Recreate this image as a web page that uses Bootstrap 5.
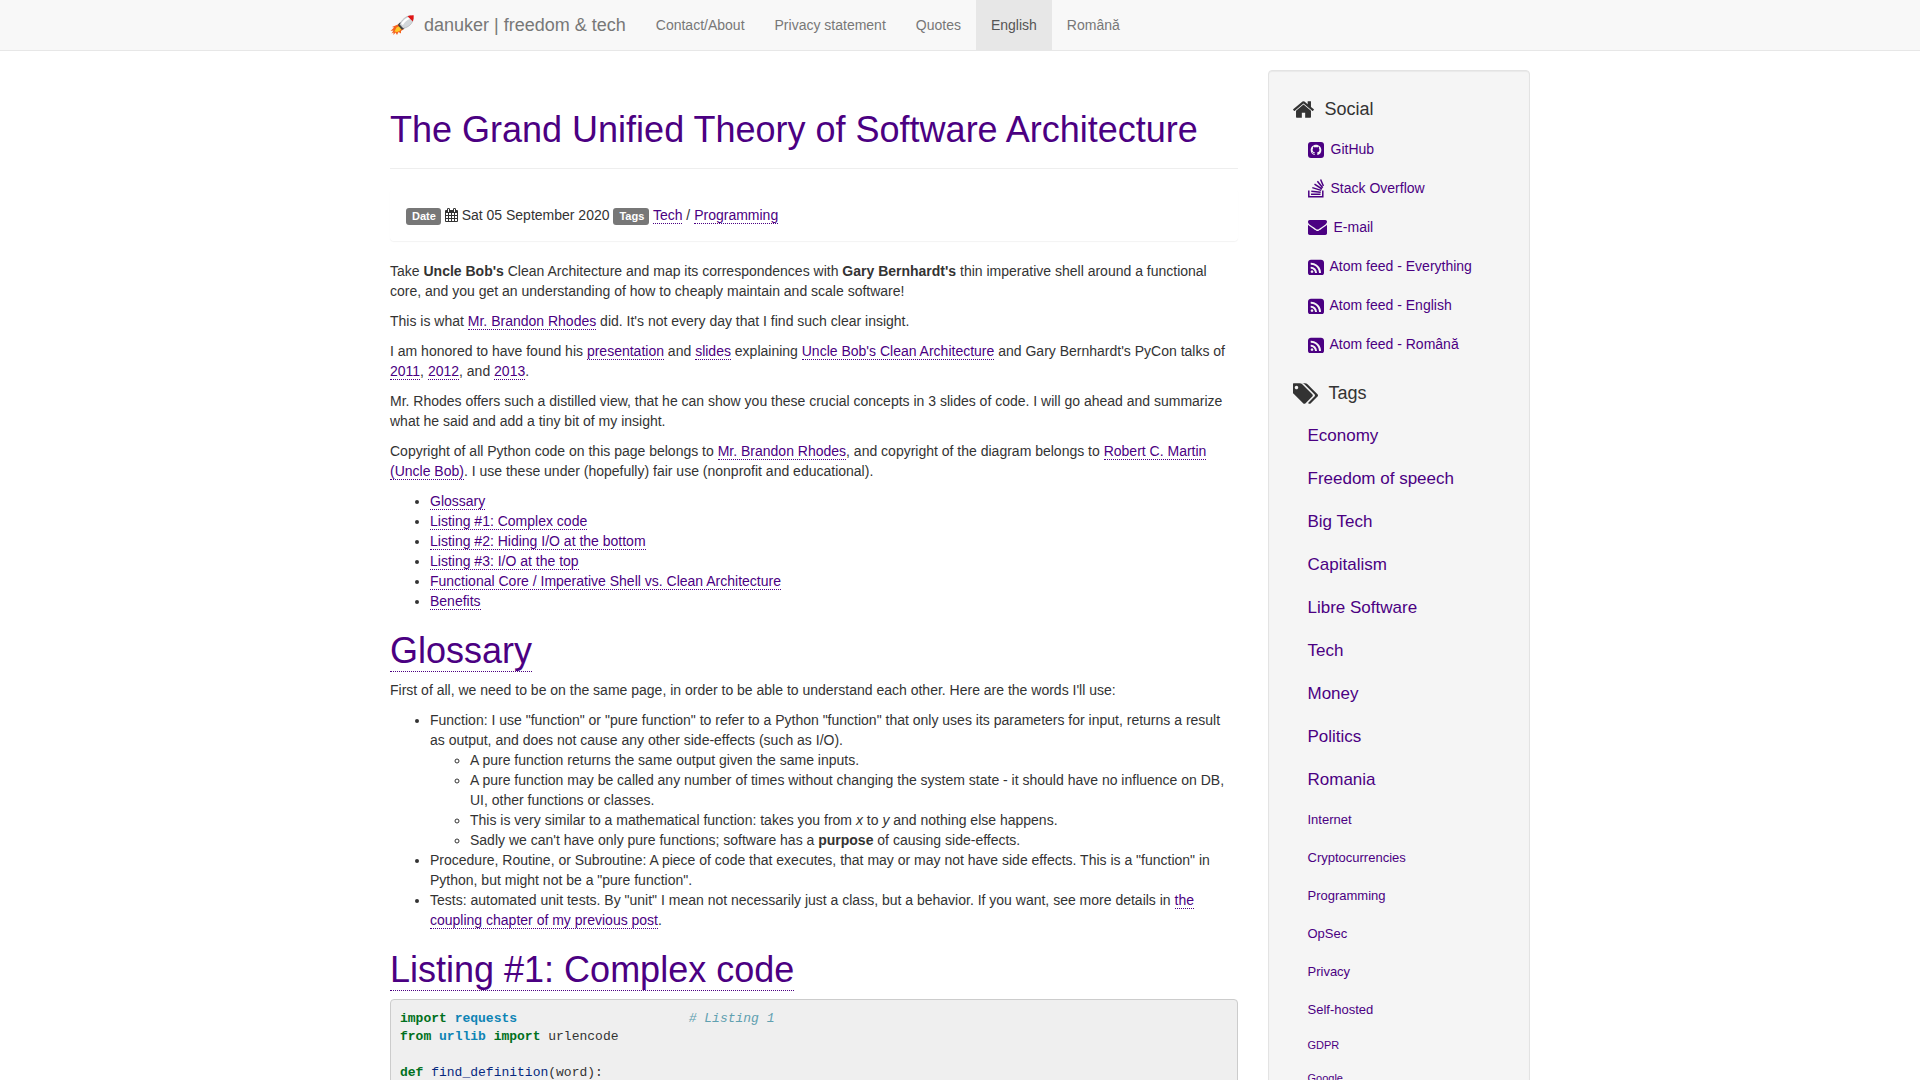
<!DOCTYPE html>
<html lang="en">
<head>
<meta charset="utf-8">
<meta name="viewport" content="width=device-width, initial-scale=1">
<title>The Grand Unified Theory of Software Architecture</title>
<link href="https://cdn.jsdelivr.net/npm/bootstrap@5.3.0/dist/css/bootstrap.min.css" rel="stylesheet">
<style>
:root { --indigo: #4b0082; }
body { font-family: "Liberation Sans", Arial, sans-serif; font-size: 14px; line-height: 20px; color: #333; background: #fff; padding-top: 70px; }
a { color: var(--indigo); text-decoration: none; }
a:hover { color: #2a004a; }
.site-width { --bs-gutter-x: 30px; max-width: 1170px; }
.site-row { --bs-gutter-x: 30px; }

.site-nav { background: #f8f8f8; border-bottom: 1px solid #e7e7e7; padding: 0; }
.site-nav .navbar-brand { color: #777; font-size: 18px; line-height: 20px; padding: 15px 15px 15px 0; margin: 0; gap: 10px; }
.site-nav .nav-link { color: #777; padding: 15px !important; line-height: 20px; }
.site-nav .nav-link.active { color: #555; background: #e7e7e7; }

article h1 { font-size: 36px; line-height: 39px; font-weight: 400; color: var(--indigo); margin: 20px 0 10px; }
article p { margin-bottom: 10px; }
article ul { padding-left: 40px; margin-bottom: 10px; }
article ul ul { margin-bottom: 0; }
article p a, article li a, article h1 a, .post-info a { border-bottom: 1px dotted var(--indigo); }
article .title-bar a { border-bottom: 0; }
.title-bar { border-bottom: 1px solid #eee; padding: 40px 0 9px; margin-bottom: 20px; }
.title-bar h1 { margin-top: 0; }
.post-info { border: 1px solid transparent; border-radius: 4px; box-shadow: 0 1px 1px rgba(0,0,0,.05); padding: 15px; margin-bottom: 20px; }
.post-info .badge { display: inline; background: #777; font-size: 11px; line-height: 11px; padding: 2px 5px 3px 6px; border-radius: 3px; vertical-align: baseline; }
.post-info svg { vertical-align: -2px; }
.listing { font-family: "Liberation Mono", monospace; font-size: 13px; line-height: 18px; color: #333; background: #efefef; border: 1px solid #ccc; border-radius: 4px; padding: 10px 9px; margin-bottom: 10px; }
.listing .k { color: #007020; font-weight: 700; }
.listing .m { color: #0e84b5; font-weight: 700; }
.listing .f { color: #06287e; }
.listing .c { color: #60a0b0; font-style: italic; }

.side-well { background: #f5f5f5; border: 1px solid #e3e3e3; border-radius: 4px; box-shadow: inset 0 1px 1px rgba(0,0,0,.05); padding: 19px 24px; }
.side-well h4 { display: flex; align-items: center; gap: 11px; font-size: 18px; line-height: 38px; font-weight: 400; margin: 0 0 2px; }
.side-well section + section { margin-top: 10px; }
.side-well ul { padding-left: 15px; margin: 0; }
.social-item a { display: flex; align-items: center; gap: 7px; line-height: 39px; }
.social-item .feed-link { gap: 6px; }
.tag-lg { font-size: 17px; line-height: 43px; }
.tag-md { font-size: 13px; line-height: 38px; }
.tag-sm { font-size: 11px; line-height: 33px; }
svg { flex: none; }
</style>
<script src="https://cdn.jsdelivr.net/npm/bootstrap@5.3.0/dist/js/bootstrap.bundle.min.js"></script>
</head>
<body>
<nav class="navbar navbar-expand fixed-top site-nav">
  <div class="container site-width justify-content-start">
    <a class="navbar-brand d-flex align-items-center" href="#">
      <svg width="24" height="20" viewBox="0 0 24 20" aria-hidden="true">
        <path d="M1.500 18.500 3.500 15.500 0.500 16 4 12.500 2 12 9 9 14 14 11 16 11 18.500 8.500 17 7 20 5.500 17.500 3.500 20 3.500 17.500z" fill="#f4631e"/>
        <path d="M4.500 16.500 6.500 12.500 9.500 11 12 13.500 9.500 16 7 17z" fill="#ffca28"/>
        <path d="M8.500 11C7.500 9.500 9 7.500 11 7.500L14.500 11.500C15.200 13 13.500 15 11.500 14.500z" fill="#424242"/>
        <path d="M9.800 9.500C11.500 5 15.500 1.200 20.500 .6L23.500 3.500C22.800 8.500 18.500 12.500 13.200 13.300z" fill="#d3d7da" stroke="#8d9194" stroke-width=".4"/>
        <path d="M12 9.500C13.500 6.500 16.500 4 20 2.800" stroke="#fff" stroke-width="2.200" fill="none"/>
        <path d="M17.500 1.200Q20.500 0 23.700 0.200 24 3.500 22.800 6.500z" fill="#e01515"/>
      </svg>
      <span>danuker | freedom &amp; tech</span>
    </a>
    <ul class="navbar-nav">
      <li class="nav-item"><a class="nav-link" href="#">Contact/About</a></li>
      <li class="nav-item"><a class="nav-link" href="#">Privacy statement</a></li>
      <li class="nav-item"><a class="nav-link" href="#">Quotes</a></li>
      <li class="nav-item"><a class="nav-link active" href="#" aria-current="page">English</a></li>
      <li class="nav-item"><a class="nav-link" href="#">Română</a></li>
    </ul>
  </div>
</nav>

<div class="container site-width">
  <div class="row site-row">
    <main class="col-9">
      <article>
        <header class="title-bar"><h1><a href="#">The Grand Unified Theory of Software Architecture</a></h1></header>
        <div class="post-info">
          <span class="badge">Date</span>
          <svg width="13" height="14" viewBox="0 0 13 14" aria-hidden="true"><path fill="#333" fill-rule="evenodd" d="M1 2H2V1Q2 0 3.500 0T5 1V2H8V1Q8 0 9.500 0T11 1V2H12Q13 2 13 3V13Q13 14 12 14H1Q0 14 0 13V3Q0 2 1 2zM3 1V4H4V1zM9 1V4H10V1zM1 5V7H3V5zM4 5V7H6V5zM7 5V7H9V5zM10 5V7H12V5zM1 8V10H3V8zM4 8V10H6V8zM7 8V10H9V8zM10 8V10H12V8zM1 11V13H3V11zM4 11V13H6V11zM7 11V13H9V11zM10 11V13H12V11z"/></svg>
          <time datetime="2020-09-05">Sat 05 September 2020</time>
          <span class="badge">Tags</span>
          <a href="#">Tech</a> / <a href="#">Programming</a>
        </div>
        <p>Take <strong>Uncle Bob's</strong> Clean Architecture and map its correspondences with <strong>Gary Bernhardt's</strong> thin imperative shell around a functional core, and you get an understanding of how to cheaply maintain and scale software!</p>
        <p>This is what <a href="#">Mr. Brandon Rhodes</a> did. It's not every day that I find such clear insight.</p>
        <p>I am honored to have found his <a href="#">presentation</a> and <a href="#">slides</a> explaining <a href="#">Uncle Bob's Clean Architecture</a> and Gary Bernhardt's PyCon talks of <a href="#">2011</a>, <a href="#">2012</a>, and <a href="#">2013</a>.</p>
        <p>Mr. Rhodes offers such a distilled view, that he can show you these crucial concepts in 3 slides of code. I will go ahead and summarize what he said and add a tiny bit of my insight.</p>
        <p>Copyright of all Python code on this page belongs to <a href="#">Mr. Brandon Rhodes</a>, and copyright of the diagram belongs to <a href="#">Robert C. Martin (Uncle Bob)</a>. I use these under (hopefully) fair use (nonprofit and educational).</p>
        <ul>
          <li><a href="#glossary">Glossary</a></li>
          <li><a href="#listing-1">Listing #1: Complex code</a></li>
          <li><a href="#">Listing #2: Hiding I/O at the bottom</a></li>
          <li><a href="#">Listing #3: I/O at the top</a></li>
          <li><a href="#">Functional Core / Imperative Shell vs. Clean Architecture</a></li>
          <li><a href="#">Benefits</a></li>
        </ul>
        <h1 id="glossary"><a href="#glossary">Glossary</a></h1>
        <p>First of all, we need to be on the same page, in order to be able to understand each other. Here are the words I'll use:</p>
        <ul>
          <li>Function: I use "function" or "pure function" to refer to a Python "function" that only uses its parameters for input, returns a result as output, and does not cause any other side-effects (such as I/O).
            <ul>
              <li>A pure function returns the same output given the same inputs.</li>
              <li>A pure function may be called any number of times without changing the system state - it should have no influence on DB, UI, other functions or classes.</li>
              <li>This is very similar to a mathematical function: takes you from <em>x</em> to <em>y</em> and nothing else happens.</li>
              <li>Sadly we can't have only pure functions; software has a <strong>purpose</strong> of causing side-effects.</li>
            </ul>
          </li>
          <li>Procedure, Routine, or Subroutine: A piece of code that executes, that may or may not have side effects. This is a "function" in Python, but might not be a "pure function".</li>
          <li>Tests: automated unit tests. By "unit" I mean not necessarily just a class, but a behavior. If you want, see more details in <a href="#">the coupling chapter of my previous post</a>.</li>
        </ul>
        <h1 id="listing-1"><a href="#listing-1">Listing #1: Complex code</a></h1>
<pre class="listing"><span class="k">import</span> <span class="m">requests</span>                      <span class="c"># Listing 1</span>
<span class="k">from</span> <span class="m">urllib</span> <span class="k">import</span> urlencode

<span class="k">def</span> <span class="f">find_definition</span>(word):</pre>
      </article>
    </main>

    <aside class="col-3">
      <div class="side-well">
        <section>
          <h4><svg width="21" height="17" viewBox="89 240 1614 1310" fill="#333" aria-hidden="true"><path d="M1472 992v480q0 26-19 45t-45 19h-384v-384h-256v384h-384q-26 0-45-19t-19-45v-480q0-1 .5-3t.5-3l575-474 575 474q1 2 1 6zm223-69l-62 74q-8 9-21 11h-3q-13 0-21-7l-692-577-692 577q-12 8-24 7-13-2-21-11l-62-74q-8-10-7-23.500t11-21.500l719-599q32-26 76-26t76 26l244 204v-195q0-14 9-23t23-9h192q14 0 23 9t9 23v408l219 182q10 8 11 21.500t-7 23.500z"/></svg>Social</h4>
          <ul class="list-unstyled social-item">
            <li><a href="#"><svg width="16" height="16" viewBox="0 0 24 24" aria-hidden="true"><rect width="24" height="24" rx="4.500" fill="#4b0082"/><path transform="translate(4 4)" fill="#f5f5f5" d="M8 0C3.580 0 0 3.580 0 8c0 3.540 2.290 6.530 5.470 7.590.4.070.55-.17.55-.38 0-.19-.01-.82-.01-1.490-2.010.37-2.530-.49-2.690-.94-.09-.23-.48-.94-.82-1.130-.28-.15-.68-.52-.01-.53.63-.01 1.080.58 1.230.82.72 1.210 1.870.87 2.330.66.07-.52.28-.87.51-1.070-1.780-.2-3.640-.89-3.640-3.950 0-.87.31-1.590.82-2.150-.08-.2-.36-1.020.08-2.120 0 0 .67-.21 2.200.82.64-.18 1.320-.27 2-.27.68 0 1.360.09 2 .27 1.530-1.040 2.200-.82 2.200-.82.44 1.100.16 1.920.08 2.120.51.56.82 1.270.82 2.150 0 3.070-1.870 3.750-3.650 3.950.29.25.54.73.54 1.480 0 1.070-.01 1.930-.01 2.200 0 .21.15.46.55.38A8.010 8.010 0 0 0 16 8c0-4.420-3.580-8-8-8z"/></svg>GitHub</a></li>
            <li><a href="#"><svg width="16" height="19" viewBox="0 0 16 19" fill="none" stroke="#4b0082" stroke-width="1.500" aria-hidden="true"><path d="M.8 11.500V17.700H14.800V11.500M3 15.300H12.500M3.300 12.200 12.700 13.200M4.300 8.600 13.200 11.400M6.500 5.200 14 10M9.400 2.300 14.700 8.700M12.600.5 15.400 7"/></svg>Stack Overflow</a></li>
            <li><a href="#"><svg width="19" height="15" viewBox="0 256 1792 1408" fill="#4b0082" aria-hidden="true"><path d="M1792 710v794q0 66-47 113t-113 47h-1472q-66 0-113-47t-47-113v-794q44 49 101 87 362 246 497 345 57 42 92.500 65.500t94.500 48 110 24.500h2q51 0 110-24.500t94.500-48 92.500-65.500q170-123 498-345 57-39 100-87zm0-294q0 79-49 151t-122 123q-376 261-468 325-10 7-42.500 31t-54 38.500-52 32.500-57.500 27-50 9h-2q-23 0-50-9t-57.500-27-52-32.500-54-38.500-42.500-31q-91-64-262-182.500t-205-142.500q-62-42-117-115.500t-55-136.500q0-78 41.500-130t118.500-52h1472q65 0 112.500 47t47.500 113z"/></svg>E-mail</a></li>
            <li><a class="feed-link" href="#"><svg width="16" height="16" viewBox="128 128 1536 1536" fill="#4b0082" aria-hidden="true"><path id="feed-icon" d="M640 1344q0-53-37.500-90.500t-90.500-37.500-90.500 37.500-37.500 90.500 37.500 90.500 90.500 37.500 90.500-37.500 37.500-90.500zm351 94q-13-232-177-396t-396-177q-14-1-24 9t-10 23v128q0 13 8.500 22t21.500 10q154 11 264 121t121 264q1 13 10 21.500t22 8.500h128q13 0 23-10t9-24zm384 1q-5-154-56-297.500t-139.500-260-205-205-260-139.500-297.500-56q-14-1-23 9-10 10-10 23v128q0 13 9 22t22 10q204 7 378 111.500t278.500 278.500 111.500 378q1 13 10 22t22 9h128q13 0 23-10 11-9 9-23zm289-959v960q0 119-84.500 203.500t-203.500 84.500h-960q-119 0-203.500-84.500t-84.500-203.500v-960q0-119 84.500-203.500t203.500-84.500h960q119 0 203.500 84.500t84.500 203.500z"/></svg>Atom feed - Everything</a></li>
            <li><a class="feed-link" href="#"><svg width="16" height="16" viewBox="128 128 1536 1536" fill="#4b0082" aria-hidden="true"><use href="#feed-icon"/></svg>Atom feed - English</a></li>
            <li><a class="feed-link" href="#"><svg width="16" height="16" viewBox="128 128 1536 1536" fill="#4b0082" aria-hidden="true"><use href="#feed-icon"/></svg>Atom feed - Română</a></li>
          </ul>
        </section>
        <section>
          <h4><svg width="25" height="21" viewBox="0 128 1835 1515" fill="#333" aria-hidden="true"><path d="M384 448q0-53-37.500-90.500t-90.500-37.500-90.500 37.500-37.500 90.500 37.500 90.500 90.500 37.500 90.500-37.500 37.500-90.500zm1067 576q0 53-37 90l-491 492q-39 37-91 37-53 0-90-37l-715-716q-38-37-64.500-101t-26.500-117v-416q0-52 38-90t90-38h416q53 0 117 26.500t102 64.500l715 714q37 39 37 91zm384 0q0 53-37 90l-491 492q-39 37-91 37-36 0-59-14t-53-45l470-470q37-37 37-90 0-52-37-91l-715-714q-38-38-102-64.500t-117-26.500h224q53 0 117 26.500t102 64.500l715 714q37 39 37 91z"/></svg>Tags</h4>
          <ul class="list-unstyled">
            <li class="tag-lg"><a href="#">Economy</a></li>
            <li class="tag-lg"><a href="#">Freedom of speech</a></li>
            <li class="tag-lg"><a href="#">Big Tech</a></li>
            <li class="tag-lg"><a href="#">Capitalism</a></li>
            <li class="tag-lg"><a href="#">Libre Software</a></li>
            <li class="tag-lg"><a href="#">Tech</a></li>
            <li class="tag-lg"><a href="#">Money</a></li>
            <li class="tag-lg"><a href="#">Politics</a></li>
            <li class="tag-lg"><a href="#">Romania</a></li>
            <li class="tag-md"><a href="#">Internet</a></li>
            <li class="tag-md"><a href="#">Cryptocurrencies</a></li>
            <li class="tag-md"><a href="#">Programming</a></li>
            <li class="tag-md"><a href="#">OpSec</a></li>
            <li class="tag-md"><a href="#">Privacy</a></li>
            <li class="tag-md"><a href="#">Self-hosted</a></li>
            <li class="tag-sm"><a href="#">GDPR</a></li>
            <li class="tag-sm"><a href="#">Google</a></li>
          </ul>
        </section>
      </div>
    </aside>
  </div>
</div>
</body>
</html>
